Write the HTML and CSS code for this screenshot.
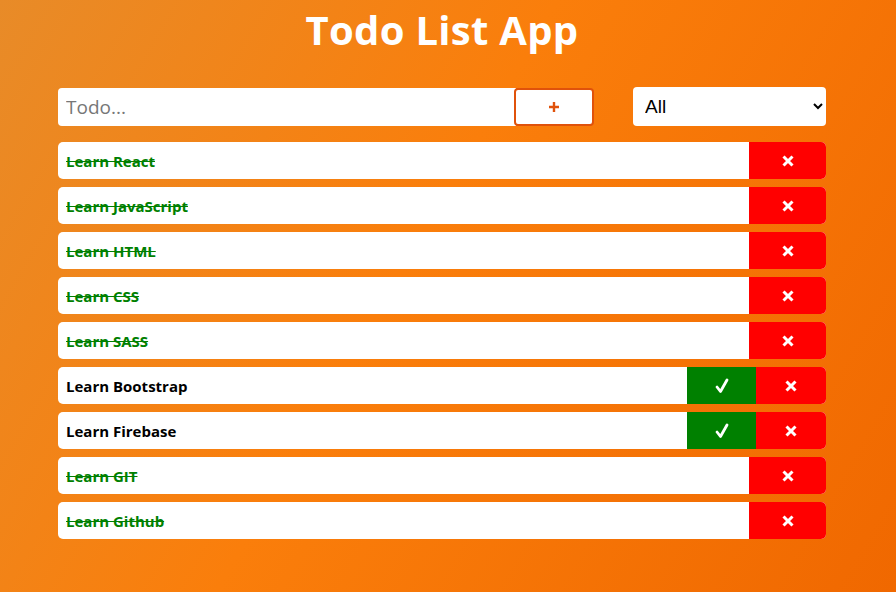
FILE: index.html
```html
<!DOCTYPE html>
<html>
<head>
<meta charset="utf-8">
<link rel="stylesheet" href="styles.css">
</head>
<body>
<header class="header"><h1 class="title">Todo List App</h1></header>
<form class="form">
  <div class="add">
    <input class="todo-input" type="text" placeholder="Todo...">
    <button class="add-btn" type="button">
      <svg width="12" height="12" viewBox="0 0 12 12"><path d="M6 1v10M1 6h10" stroke="#e0520b" stroke-width="2.4"/></svg>
    </button>
  </div>
  <select class="filter"><option>All</option></select>
</form>
<ul class="list">
  <li class="todo done"><span class="text">Learn React</span><button class="del"><svg class="x" viewBox="0 0 14 14"><path d="M2.5 2.5l9 9M11.5 2.5l-9 9"/></svg></button></li>
  <li class="todo done"><span class="text">Learn JavaScript</span><button class="del"><svg class="x" viewBox="0 0 14 14"><path d="M2.5 2.5l9 9M11.5 2.5l-9 9"/></svg></button></li>
  <li class="todo done"><span class="text">Learn HTML</span><button class="del"><svg class="x" viewBox="0 0 14 14"><path d="M2.5 2.5l9 9M11.5 2.5l-9 9"/></svg></button></li>
  <li class="todo done"><span class="text">Learn CSS</span><button class="del"><svg class="x" viewBox="0 0 14 14"><path d="M2.5 2.5l9 9M11.5 2.5l-9 9"/></svg></button></li>
  <li class="todo done"><span class="text">Learn SASS</span><button class="del"><svg class="x" viewBox="0 0 14 14"><path d="M2.5 2.5l9 9M11.5 2.5l-9 9"/></svg></button></li>
  <li class="todo"><span class="text">Learn Bootstrap</span><button class="check"><svg class="v" viewBox="0 0 14 16"><path d="M2 9l3.5 4.5L12 2"/></svg></button><button class="del short"><svg class="x" viewBox="0 0 14 14"><path d="M2.5 2.5l9 9M11.5 2.5l-9 9"/></svg></button></li>
  <li class="todo"><span class="text">Learn Firebase</span><button class="check"><svg class="v" viewBox="0 0 14 16"><path d="M2 9l3.5 4.5L12 2"/></svg></button><button class="del short"><svg class="x" viewBox="0 0 14 14"><path d="M2.5 2.5l9 9M11.5 2.5l-9 9"/></svg></button></li>
  <li class="todo done"><span class="text">Learn GIT</span><button class="del"><svg class="x" viewBox="0 0 14 14"><path d="M2.5 2.5l9 9M11.5 2.5l-9 9"/></svg></button></li>
  <li class="todo done"><span class="text">Learn Github</span><button class="del"><svg class="x" viewBox="0 0 14 14"><path d="M2.5 2.5l9 9M11.5 2.5l-9 9"/></svg></button></li>
</ul>
</body>
</html>
```
FILE: styles.css
```css
* { box-sizing: border-box; }
html, body { height: 100%; }
body {
  margin: 0;
  font-family: "Open Sans", "Noto Sans", sans-serif;
  background: linear-gradient(120deg, #e88b28 0%, #fa7e0b 45%, #f06800 100%);
  min-height: 592px;
  padding-left: 58px;
  padding-right: 70px;
}
.header { height: 64px; display: flex; justify-content: center; padding-top: 4px; }
.title {
  margin: 0;
  color: #fff;
  font-size: 40px;
  font-weight: 700;
  line-height: 52px;
  letter-spacing: 0.3px;
}
.form {
  display: flex;
  justify-content: space-between;
  align-items: center;
  margin-top: 23px;
  height: 39px;
}
.add { display: flex; height: 38px; }
.todo-input {
  width: 458px;
  height: 38px;
  border: none;
  border-radius: 4px 0 0 4px;
  background: #fff;
  padding: 0 8px;
  font-size: 19px;
  font-family: "Open Sans", sans-serif;
  outline: none;
}
.todo-input::placeholder { color: #777; }
.add-btn {
  width: 80px;
  height: 38px;
  margin-left: -2px;
  background: #fff;
  border: 2px solid #e0520b;
  border-radius: 4px;
  display: flex;
  align-items: center;
  justify-content: center;
  padding: 0;
}
.filter {
  width: 193px;
  height: 39px;
  border: none;
  border-radius: 4px;
  background: #fff;
  font-size: 19px;
  font-family: "Liberation Sans", Arial, sans-serif;
  padding: 0 8px;
  color: #000;
}
.list {
  list-style: none;
  margin: 16px 0 0;
  padding: 0;
  display: flex;
  flex-direction: column;
  gap: 8px;
}
.todo {
  display: flex;
  align-items: stretch;
  height: 37px;
  background: #fff;
  border-radius: 5px;
  overflow: hidden;
}
.text {
  flex: 1;
  display: flex;
  align-items: center;
  padding-left: 8px;
  font-size: 15px;
  font-weight: 700;
  color: #000;
}
.done .text { color: #008000; text-decoration: line-through; }
.check, .del {
  border: none;
  padding: 0;
  display: flex;
  align-items: center;
  justify-content: center;
}
.check { width: 69px; background: #008000; }
.del { width: 77px; background: #ff0000; }
.del.short { width: 70px; }
.x { width: 14px; height: 14px; fill: none; stroke: #fff; stroke-width: 3; }
.v { width: 14px; height: 16px; fill: none; stroke: #fff; stroke-width: 2.8; stroke-linecap: round; stroke-linejoin: round; }
```
